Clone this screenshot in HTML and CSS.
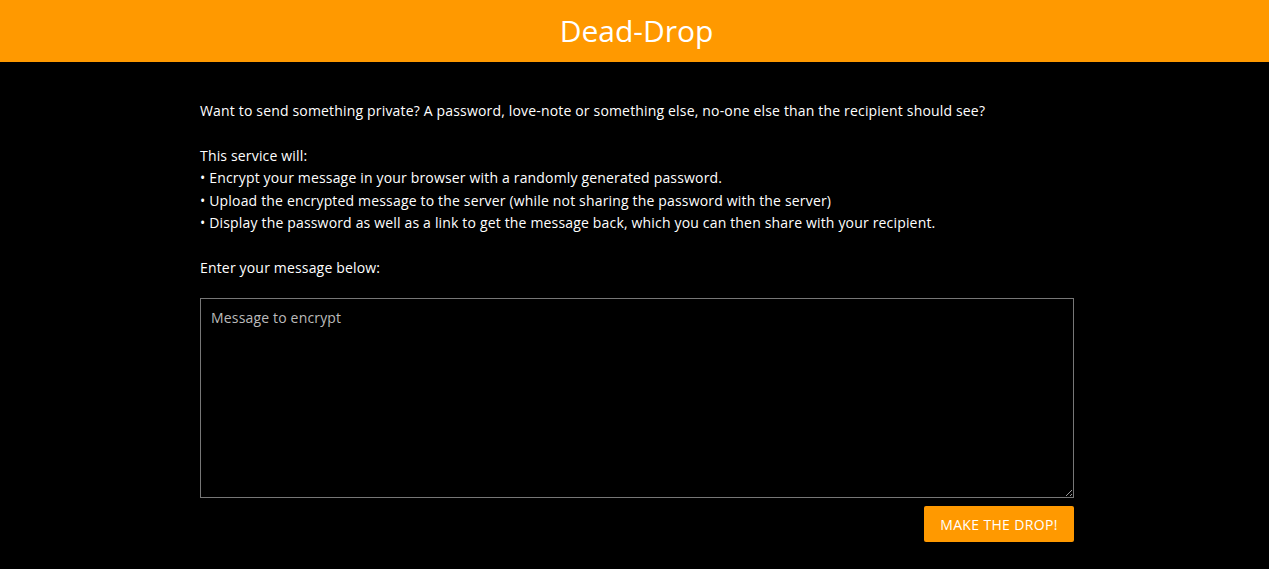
FILE: index.html
```html
<!DOCTYPE html>
<html lang="en">
<head>
<meta charset="utf-8">
<title>Dead-Drop</title>
<link rel="stylesheet" href="styles.css">
</head>
<body>
<header class="topbar"><h1 class="title">Dead-Drop</h1></header>
<main class="content">
  <p class="para">Want to send something private? A password, love-note or something else, no-one else than the recipient should see?</p>
  <p class="para">This service will:<br>• Encrypt your message in your browser with a randomly generated password.<br>• Upload the encrypted message to the server (while not sharing the password with the server)<br>• Display the password as well as a link to get the message back, which you can then share with your recipient.</p>
  <p class="para last">Enter your message below:</p>
  <textarea class="message" placeholder="Message to encrypt"></textarea>
  <div class="actions"><button class="drop">MAKE THE DROP!</button></div>
</main>
</body>
</html>
```
FILE: styles.css
```css
html, body {
  margin: 0;
  padding: 0;
  background: #000;
  color: #fff;
  font-family: "Open Sans", "Noto Sans", sans-serif;
}
.topbar {
  background: #ff9900;
  height: 62px;
  padding-left: 4px;
  display: flex;
  align-items: center;
  justify-content: center;
}
.title {
  margin: 0;
  font-weight: 400;
  font-size: 30px;
  color: #fff;
  line-height: 1;
}
.content {
  width: 874px;
  margin-left: 200px;
  padding-top: 38px;
  font-size: 14px;
  line-height: 22.4px;
  letter-spacing: 0.17px;
}
.para {
  margin: 0 0 22.4px;
}
.para.last {
  margin-bottom: 19px;
}
.message {
  display: block;
  box-sizing: border-box;
  width: 874px;
  height: 200px;
  margin: 0;
  padding: 9px 10px;
  background: #000;
  color: #fff;
  border: 1px solid #777;
  font-family: inherit;
  font-size: 14px;
  line-height: 20px;
  letter-spacing: 0.17px;
}
.message::placeholder {
  color: #bbb;
}
.actions {
  display: flex;
  justify-content: flex-end;
  margin-top: 8px;
}
.drop {
  width: 150px;
  height: 36px;
  background: #ff9900;
  color: #fff;
  border: none;
  border-radius: 2px;
  font-family: inherit;
  font-size: 14px;
  letter-spacing: 0.35px;
  padding: 0;
}
```
